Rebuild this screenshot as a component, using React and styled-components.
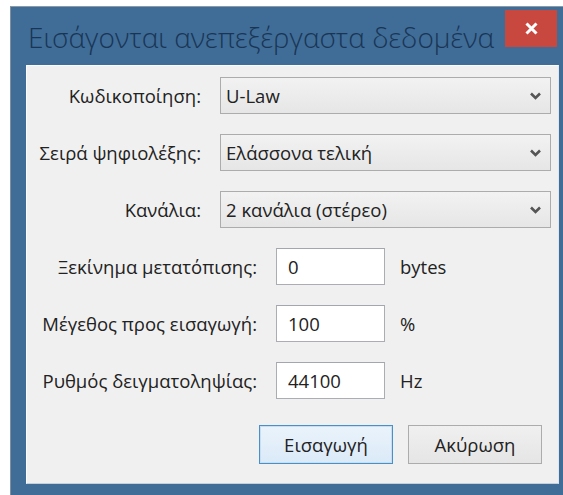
import React from "react";
import styled, { createGlobalStyle } from "styled-components";

const Global = createGlobalStyle`
  html, body {
    margin: 0;
    padding: 0;
    background: #ffffff;
    overflow: hidden;
  }
  body {
    width: 563px;
    height: 495px;
    font-family: "Open Sans", "Noto Sans", sans-serif;
  }
`;

const Page = styled.div`
  padding: 6px 0 0 10px;
`;

const Window = styled.div`
  width: 563px;
  background: #3f6d98;
  border: 1px solid #7f8f9e;
  border-top-color: #8c9aa6;
  display: flex;
  flex-direction: column;
`;

const TitleBar = styled.div`
  height: 58px;
  display: flex;
  align-items: flex-start;
  justify-content: space-between;
  padding: 0 17px 0 17px;
`;

const Title = styled.div`
  margin-top: 11px;
  font-size: 28px;
  line-height: 38px;
  font-weight: 300;
  color: #1a3554;
  white-space: nowrap;
`;

const CloseButton = styled.div`
  margin-top: 3px;
  width: 52px;
  height: 37px;
  background: #c8473f;
  display: flex;
  align-items: center;
  justify-content: center;
`;

const Body = styled.div`
  margin: 0 15px 16px 15px;
  background: #f0f0f0;
  border-left: 1px solid #f9fbfd;
  border-top: 1px solid #f9fbfd;
  border-bottom: 1px solid #c3d1de;
  border-right: 1px solid #dfe6ec;
  padding: 11px 0 19px 0;
  display: flex;
  flex-direction: column;
  gap: 20px;
`;

const Row = styled.div`
  display: flex;
  align-items: center;
  height: 37px;
`;

const Label = styled.div`
  width: ${(p) => p.$width}px;
  text-align: right;
  font-size: 18.5px;
  color: #222222;
  white-space: nowrap;
  margin-right: 19px;
`;

const Combo = styled.div`
  box-sizing: border-box;
  width: 331px;
  height: 37px;
  border: 1px solid #acacac;
  background: linear-gradient(#f2f2f2, #e6e6e6);
  display: flex;
  align-items: center;
  justify-content: space-between;
  padding: 0 9px 0 5px;
  font-size: 18.5px;
  color: #222222;
`;

const Field = styled.div`
  box-sizing: border-box;
  width: 109px;
  height: 37px;
  border: 1px solid #abadb3;
  border-top-color: #a3a6ad;
  background: #ffffff;
  display: flex;
  align-items: center;
  padding: 0 11px;
  font-size: 18.5px;
  color: #222222;
`;

const Unit = styled.div`
  margin-left: 15px;
  font-size: 18.5px;
  color: #222222;
`;

const Actions = styled.div`
  display: flex;
  justify-content: flex-end;
  gap: 15px;
  padding-right: 16px;
  margin-top: 6px;
`;

const Button = styled.div`
  box-sizing: border-box;
  width: 134px;
  height: 39px;
  display: flex;
  align-items: center;
  justify-content: center;
  font-size: 18.5px;
  color: #222222;
  border: 1px solid ${(p) => (p.$primary ? "#4a8fc7" : "#acacac")};
  background: ${(p) =>
    p.$primary
      ? "linear-gradient(#eaf3fb, #dbeaf8)"
      : "linear-gradient(#f0f0f0, #e5e5e5)"};
  box-shadow: ${(p) => (p.$primary ? "inset 0 0 0 1px #c6dff3" : "none")};
`;

const Chevron = () => (
  <svg width="11" height="8" viewBox="0 0 11 8">
    <path d="M1 1.5 L5.5 6 L10 1.5" fill="none" stroke="#555" strokeWidth="2.6" />
  </svg>
);

const CloseGlyph = () => (
  <svg width="13" height="13" viewBox="0 0 13 13">
    <path d="M1.5 1.5 L11.5 11.5 M11.5 1.5 L1.5 11.5" stroke="#ffffff" strokeWidth="3" />
  </svg>
);

const combos = [
  { label: "Κωδικοποίηση:", value: "U-Law" },
  { label: "Σειρά ψηφιολέξης:", value: "Ελάσσονα τελική" },
  { label: "Κανάλια:", value: "2 κανάλια (στέρεο)" },
];

const fields = [
  { label: "Ξεκίνημα μετατόπισης:", value: "0", unit: "bytes" },
  { label: "Μέγεθος προς εισαγωγή:", value: "100", unit: "%" },
  { label: "Ρυθμός δειγματοληψίας:", value: "44100", unit: "Hz" },
];

export default function App() {
  return (
    <>
      <Global />
      <Page>
        <Window>
          <TitleBar>
            <Title>Εισάγονται ανεπεξέργαστα δεδομένα</Title>
            <CloseButton>
              <CloseGlyph />
            </CloseButton>
          </TitleBar>
          <Body>
            {combos.map((c) => (
              <Row key={c.label}>
                <Label $width={174}>{c.label}</Label>
                <Combo>
                  <span>{c.value}</span>
                  <Chevron />
                </Combo>
              </Row>
            ))}
            {fields.map((f) => (
              <Row key={f.label}>
                <Label $width={230}>{f.label}</Label>
                <Field>{f.value}</Field>
                <Unit>{f.unit}</Unit>
              </Row>
            ))}
            <Actions>
              <Button $primary>Εισαγωγή</Button>
              <Button>Ακύρωση</Button>
            </Actions>
          </Body>
        </Window>
      </Page>
    </>
  );
}
